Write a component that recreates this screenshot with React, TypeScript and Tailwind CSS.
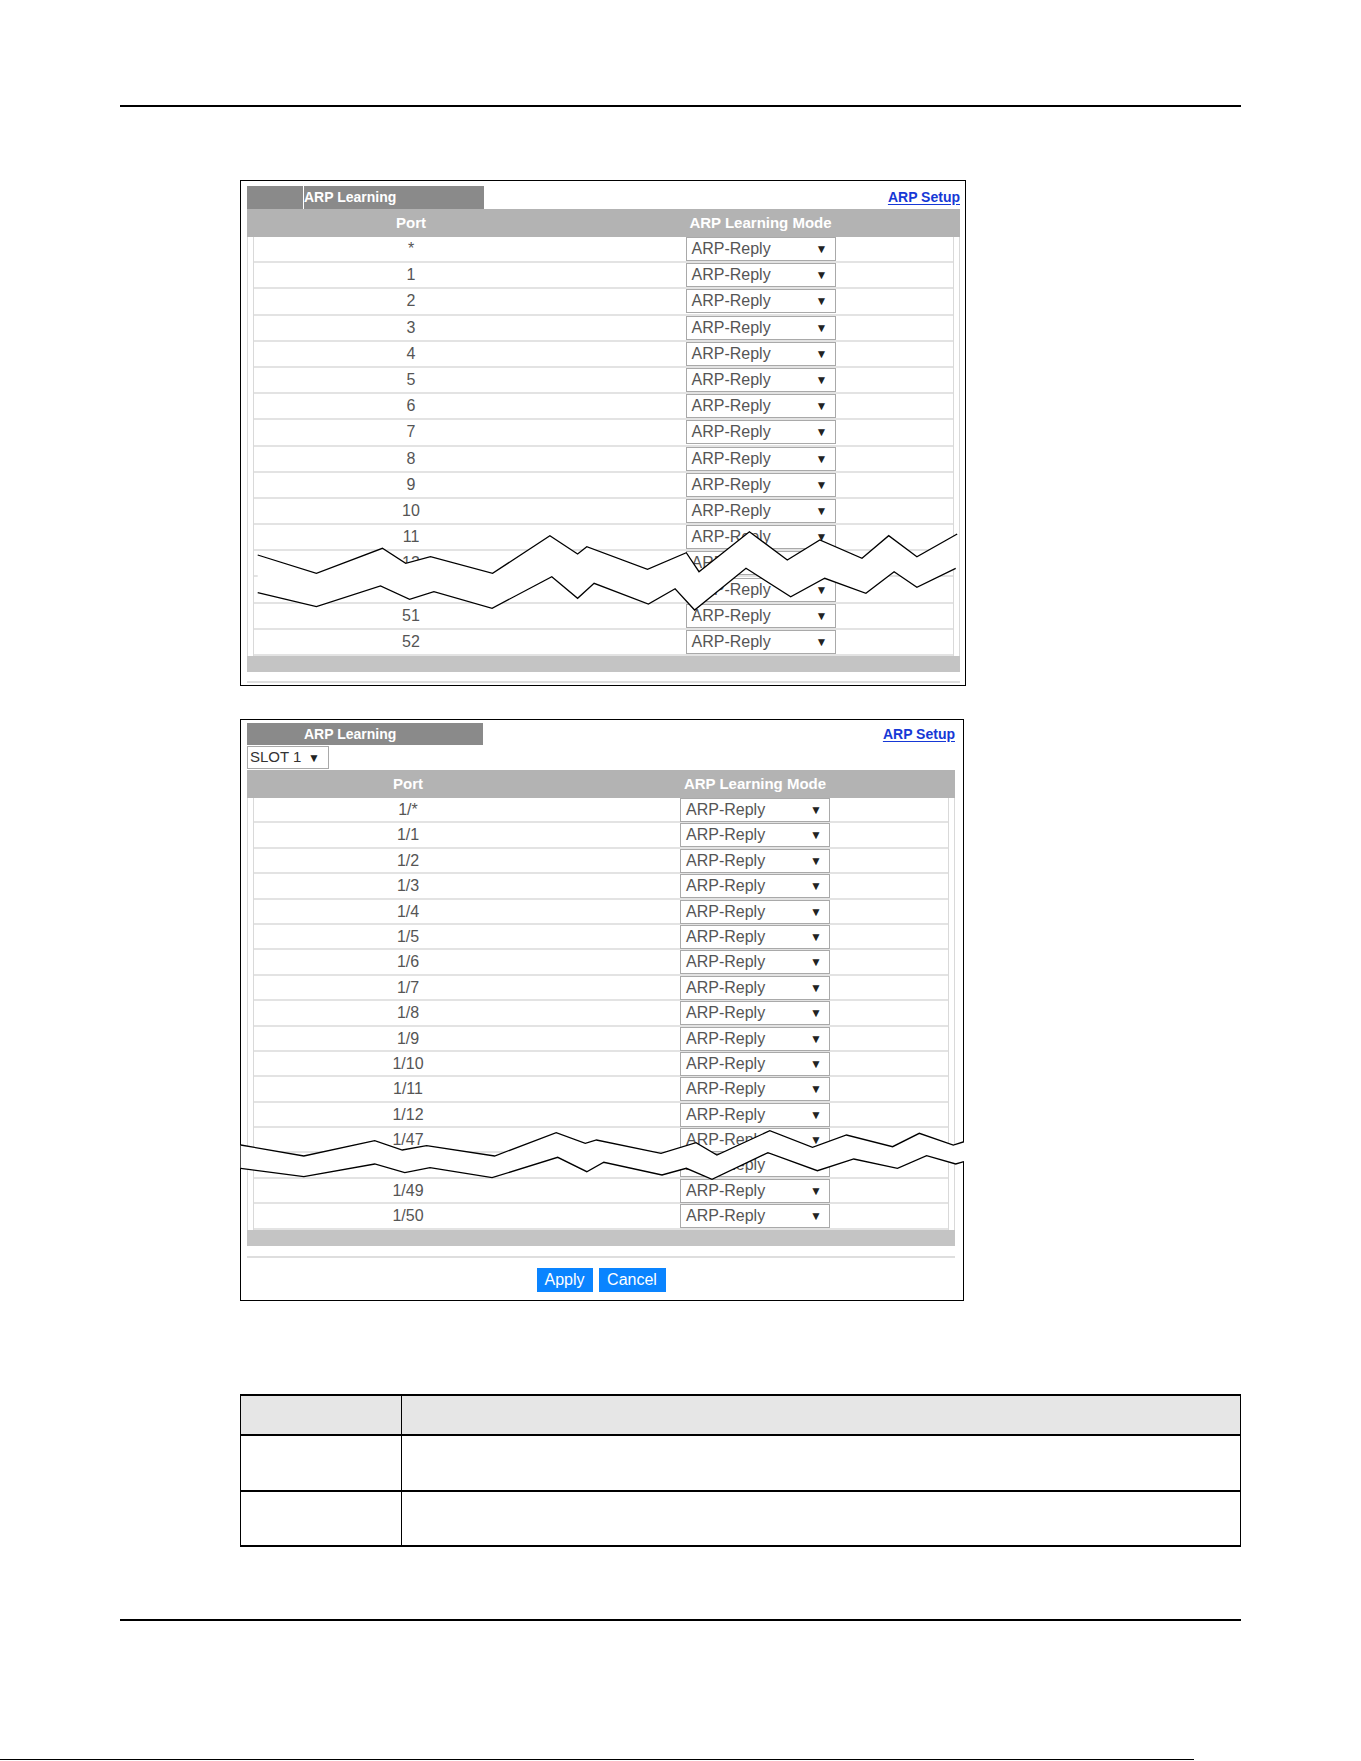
const FONT = "font-['Liberation_Sans',Arial,sans-serif]";

const panelOnePorts = ["*", "1", "2", "3", "4", "5", "6", "7", "8", "9", "10", "11", "12", "50", "51", "52"];
const panelTwoPorts = ["1/*", "1/1", "1/2", "1/3", "1/4", "1/5", "1/6", "1/7", "1/8", "1/9", "1/10", "1/11", "1/12", "1/47", "1/48", "1/49", "1/50"];

const breakOne = {
  upper:
    "257.7,555 316.4,573.3 382.4,548.3 405.7,563.3 430.5,556.7 492.6,573.3 549.9,535.7 577.6,554 586.8,546.7 647.5,569.3 686.3,552.7 699,571.7 749.4,531.7 787.3,560 819.8,540 862,558.3 888.7,535.7 916.9,556.7 957.2,534",
  lower:
    "257.7,592.7 316.4,606.7 380.5,586 409.6,599.3 433.9,591.7 492.1,608.3 551.8,576.7 577.6,598.3 594.1,583.3 648.4,604 675.1,588.7 694.6,610 746,568.3 790.7,596.7 824.7,578.3 865.9,593.3 894.1,571.7 916.9,587.3 955.7,568.3",
};

const breakTwo = {
  upper:
    "240.7,1145 303.8,1156 374.7,1140.7 402.3,1150 426.6,1145.7 494.6,1156 556.2,1132.7 585.3,1143.3 596.5,1140 661,1153.3 696,1142.7 716.9,1155 769.8,1130.7 812.5,1147.3 846.5,1135 892.6,1146.7 919.3,1133.3 953.3,1145 964,1141.7",
  lower:
    "240.7,1168.3 303.8,1176.7 374.7,1164 404.8,1172.7 430,1167.7 492.1,1177.7 557.7,1157.3 586.8,1171.7 603.8,1162.3 662,1175 686.3,1168.3 712,1179.3 767.9,1152.7 817.4,1170.7 853.8,1159 897.5,1168.3 926.6,1155.7 955.7,1164 964,1161.7",
};

function BreakLines({ upper, lower, viewBox, width, height }: { upper: string; lower: string; viewBox: string; width: number; height: number }) {
  const fill = upper + " " + lower.split(" ").reverse().join(" ");
  return (
    <svg
      className="pointer-events-none absolute left-[-1px] top-[-1px]"
      width={width}
      height={height}
      viewBox={viewBox}
    >
      <polygon points={fill} fill="#ffffff" />
      <polyline points={upper} fill="none" stroke="#000" strokeWidth="1.3" strokeLinejoin="miter" />
      <polyline points={lower} fill="none" stroke="#000" strokeWidth="1.3" strokeLinejoin="miter" />
    </svg>
  );
}

function ModeSelect() {
  return (
    <div className="flex h-[24px] w-[150px] items-center justify-between border border-[#a9a9a9] bg-white pl-[5px] pr-[7px] text-[16px] leading-none text-[#555]">
      <span>ARP-Reply</span>
      <span className="text-[12px] text-[#222]">▼</span>
    </div>
  );
}

function PortTable({ ports, col, rowH }: { ports: string[]; col: string; rowH: string }) {
  return (
    <div>
      <div className={`grid h-[28px] items-center bg-[#b3b3b3] px-[7px] text-[15px] font-bold text-white ${col}`}>
        <div className="text-center">Port</div>
        <div className="text-center">ARP Learning Mode</div>
      </div>
      <div className="border-x border-[#d9d9d9] px-[5px]">
        <div className="border-x border-[#d9d9d9]">
          {ports.map((p) => (
            <div key={p} className={`grid items-center border-b-2 border-[#e3e3e3] ${rowH} ${col}`}>
              <div className="text-center text-[16px] text-[#555]">{p}</div>
              <div className="flex justify-center">
                <ModeSelect />
              </div>
            </div>
          ))}
        </div>
      </div>
      <div className="h-[16px] bg-[#c4c4c4]" />
    </div>
  );
}

function SetupLink() {
  return <span className="text-[14px] font-bold text-[#1638d6] underline underline-offset-2">ARP Setup</span>;
}

export default function App() {
  return (
    <div className={`relative h-[1761px] w-[1361px] bg-white ${FONT}`}>
      <div className="flex flex-col">
        {/* top rule */}
        <div className="ml-[120px] mt-[105px] h-[2px] w-[1121px] bg-black" />

        {/* panel one */}
        <div className="relative ml-[240px] mt-[73px] h-[506px] w-[726px] border border-black pl-[6px] pr-[5px] pt-[5px]">
          <div className="flex items-center justify-between">
            <div className="flex h-[23px] w-[237px] bg-[#8a8a8a]">
              <div className="w-[56px]" />
              <div className="w-px bg-white" />
              <div className="flex items-center text-[14px] font-bold text-white">ARP Learning</div>
            </div>
            <SetupLink />
          </div>
          <PortTable ports={panelOnePorts} col="grid-cols-[314px_1fr]" rowH="h-[26.2px]" />
          <div className="mt-[9px] h-[2px] bg-[#dedede]" />
          <BreakLines {...breakOne} viewBox="240 180 726 506" width={726} height={506} />
        </div>

        {/* panel two */}
        <div className="relative ml-[240px] mt-[33px] h-[582px] w-[724px] border border-black pl-[6px] pr-[8px] pt-[3px]">
          <div className="flex items-center justify-between">
            <div className="flex h-[22px] w-[236px] items-center bg-[#8a8a8a] pl-[57px] text-[14px] font-bold text-white">
              ARP Learning
            </div>
            <SetupLink />
          </div>
          <div className="mt-px flex h-[23px] w-[82px] items-center justify-between border border-[#a9a9a9] pl-[2px] pr-[8px] text-[15px] text-[#333]">
            <span>SLOT 1</span>
            <span className="text-[12px] text-[#222]">▼</span>
          </div>
          <div className="mt-px">
            <PortTable ports={panelTwoPorts} col="grid-cols-[308px_1fr]" rowH="h-[25.4px]" />
          </div>
          <div className="mt-[10px] h-[2px] bg-[#dedede]" />
          <div className="mt-[10px] flex justify-center gap-[6px]">
            <div className="flex h-[24px] w-[56px] items-center justify-center bg-[#0a84ff] text-[16px] text-white">Apply</div>
            <div className="flex h-[24px] w-[67px] items-center justify-center bg-[#0a84ff] text-[16px] text-white">Cancel</div>
          </div>
          <BreakLines {...breakTwo} viewBox="240 719 724 582" width={724} height={582} />
        </div>

        {/* description table */}
        <div className="ml-[240px] mt-[93px] w-[1001px] border-x-[1.5px] border-y-2 border-black">
          <div className="grid h-[40px] grid-cols-[161px_1fr] border-b-2 border-black bg-[#e6e6e6]">
            <div className="border-r border-black" />
            <div />
          </div>
          <div className="grid h-[56px] grid-cols-[161px_1fr] border-b-2 border-black">
            <div className="border-r border-black" />
            <div />
          </div>
          <div className="grid h-[53px] grid-cols-[161px_1fr]">
            <div className="border-r border-black" />
            <div />
          </div>
        </div>

        {/* bottom rule */}
        <div className="ml-[120px] mt-[72px] h-[2px] w-[1121px] bg-black" />

        {/* page edge */}
        <div className="mt-[138px] h-px w-[1194px] bg-black" />
      </div>
    </div>
  );
}
